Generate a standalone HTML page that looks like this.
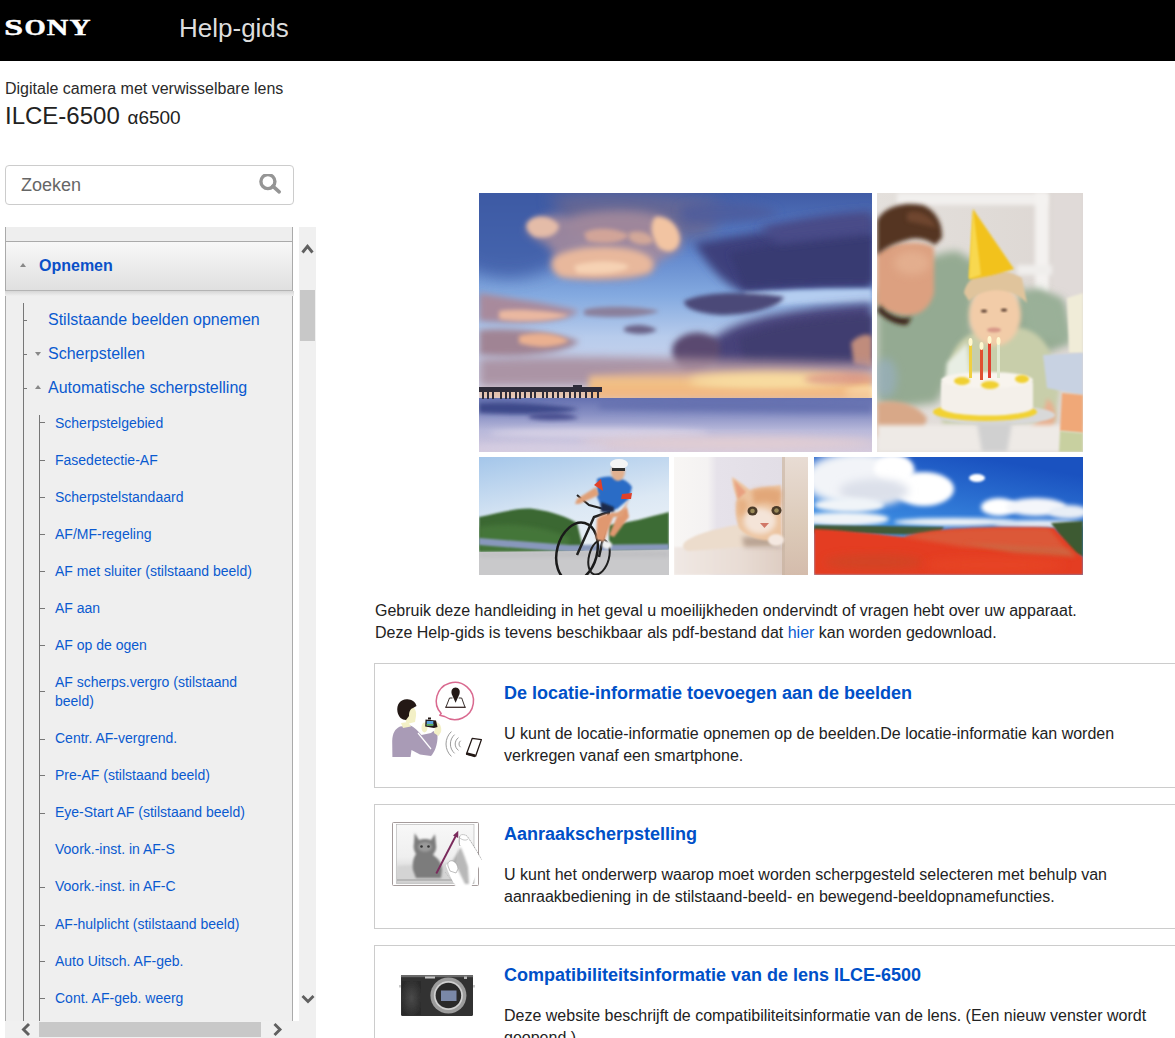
<!DOCTYPE html>
<html><head><meta charset="utf-8">
<style>
*{margin:0;padding:0;box-sizing:border-box}
html,body{width:1175px;height:1038px;overflow:hidden;background:#fff;font-family:"Liberation Sans",sans-serif;color:#333}
.a{position:absolute;white-space:nowrap}
#hdr{position:absolute;left:0;top:0;width:1175px;height:61px;background:#000}
#help{left:179px;top:13px;font-size:26px;line-height:30px;color:#ddd}
#sub{left:5px;top:79px;font-size:16px;line-height:20px;color:#2a2a2a}
#model{left:5px;top:102px;font-size:24px;line-height:28px;color:#222}
#model span{font-size:19px;margin-left:1px}
#search{position:absolute;left:5px;top:165px;width:289px;height:40px;border:1px solid #ccc;border-radius:4px;background:#fff}
#search .t{position:absolute;left:15px;top:8px;font-size:18px;line-height:22px;color:#666}
#panel{position:absolute;left:5px;top:227px;width:288px;height:794px;background:#efefef;border-left:1px solid #aaa;border-right:1px solid #aaa;overflow:hidden}
#gap{position:absolute;left:293px;top:227px;width:6px;height:794px;background:#fff}
#vsb{position:absolute;left:299px;top:227px;width:17px;height:811px;background:#f0f0f0}
#hsb{position:absolute;left:5px;top:1021px;width:311px;height:17px;background:#f0f0f0}
#topbar{position:absolute;left:0;top:0;width:286px;height:15px;background:#eee;border-bottom:1px solid #aaa}
#opn{position:absolute;left:0;top:15px;width:286px;height:49px;background:linear-gradient(#f8f8f8,#e0e0e0);border-bottom:1px solid #b4b4b4}
#opn .t{position:absolute;left:33px;top:14px;font-size:16px;font-weight:bold;color:#0a50c8;line-height:20px}
.tri{position:absolute;width:0;height:0;border-left:3px solid transparent;border-right:3px solid transparent}
.up{border-bottom:4px solid #888}
.dn{border-top:4px solid #888}
.l1{position:absolute;font-size:16px;line-height:20px;color:#0a5ad0;white-space:nowrap}
.l2{position:absolute;font-size:14px;line-height:19px;color:#0a5ad0;white-space:nowrap}
.vl{position:absolute;width:1px;background:#777}
.tk{position:absolute;height:1px;background:#777}
#intro{left:375px;top:600px;font-size:16px;line-height:21.6px;color:#222}
#intro a{color:#0a5ad0;text-decoration:none}
.card{position:absolute;left:374px;width:900px;height:125px;border:1px solid #ccc;background:#fff}
.card .ti{position:absolute;left:129px;top:18px;font-size:18px;font-weight:bold;color:#0050c8;line-height:22px;white-space:nowrap}
.card .bd{position:absolute;left:129px;top:59px;font-size:16px;line-height:21.6px;color:#222;white-space:nowrap}
.ph{position:absolute;overflow:hidden}
</style></head><body>
<div id="hdr">
 <svg class="a" style="left:0px;top:15px" width="96" height="24" viewBox="0 0 96 24"><g font-family="Liberation Serif" font-weight="bold" font-size="23.5" fill="#fff" stroke="#fff" stroke-width="0.5">
<text x="4.3" y="20" textLength="18.8" lengthAdjust="spacingAndGlyphs">S</text>
<text x="24.6" y="20" textLength="21.2" lengthAdjust="spacingAndGlyphs">O</text>
<text x="46.8" y="20" textLength="21.6" lengthAdjust="spacingAndGlyphs">N</text>
<text x="69.4" y="20" textLength="21" lengthAdjust="spacingAndGlyphs">Y</text></g></svg>
 <div id="help" class="a">Help-gids</div>
</div>
<div id="sub" class="a">Digitale camera met verwisselbare lens</div>
<div id="model" class="a">ILCE-6500 <span>α6500</span></div>
<div id="search"><div class="t">Zoeken</div>
 <svg style="position:absolute;left:253px;top:8px" width="26" height="26" viewBox="0 0 26 26"><circle cx="8.9" cy="7.6" r="7" fill="none" stroke="#959595" stroke-width="3.4"/><line x1="13.8" y1="12.2" x2="20.2" y2="17.8" stroke="#959595" stroke-width="3.6" stroke-linecap="round"/></svg>
</div>

<div id="panel">
 <div id="topbar"></div>
 <div class="vl" style="left:17px;top:76px;height:720px"></div>
<div class="vl" style="left:33px;top:188px;height:610px"></div>
<div class="l1" style="left:42px;top:83px">Stilstaande beelden opnemen</div>
<div class="tk" style="left:18px;top:93px;width:3px"></div>
<div class="l1" style="left:42px;top:117px">Scherpstellen</div>
<div class="tk" style="left:18px;top:127px;width:3px"></div>
<div class="tri dn" style="left:29px;top:125px"></div>
<div class="l1" style="left:42px;top:151px">Automatische scherpstelling</div>
<div class="tk" style="left:18px;top:161px;width:3px"></div>
<div class="tri up" style="left:29px;top:158px"></div>
<div class="l2" style="left:49px;top:187px">Scherpstelgebied</div>
<div class="tk" style="left:34px;top:195px;width:5px"></div>
<div class="l2" style="left:49px;top:224px">Fasedetectie-AF</div>
<div class="tk" style="left:34px;top:233px;width:5px"></div>
<div class="l2" style="left:49px;top:261px">Scherpstelstandaard</div>
<div class="tk" style="left:34px;top:270px;width:5px"></div>
<div class="l2" style="left:49px;top:298px">AF/MF-regeling</div>
<div class="tk" style="left:34px;top:307px;width:5px"></div>
<div class="l2" style="left:49px;top:335px">AF met sluiter (stilstaand beeld)</div>
<div class="tk" style="left:34px;top:344px;width:5px"></div>
<div class="l2" style="left:49px;top:372px">AF aan</div>
<div class="tk" style="left:34px;top:381px;width:5px"></div>
<div class="l2" style="left:49px;top:409px">AF op de ogen</div>
<div class="tk" style="left:34px;top:418px;width:5px"></div>
<div class="l2" style="left:49px;top:446px">AF scherps.vergro (stilstaand<br>beeld)</div>
<div class="tk" style="left:34px;top:464px;width:5px"></div>
<div class="l2" style="left:49px;top:502px">Centr. AF-vergrend.</div>
<div class="tk" style="left:34px;top:512px;width:5px"></div>
<div class="l2" style="left:49px;top:539px">Pre-AF (stilstaand beeld)</div>
<div class="tk" style="left:34px;top:548px;width:5px"></div>
<div class="l2" style="left:49px;top:576px">Eye-Start AF (stilstaand beeld)</div>
<div class="tk" style="left:34px;top:586px;width:5px"></div>
<div class="l2" style="left:49px;top:613px">Voork.-inst. in AF-S</div>
<div class="l2" style="left:49px;top:650px">Voork.-inst. in AF-C</div>
<div class="tk" style="left:34px;top:660px;width:5px"></div>
<div class="l2" style="left:49px;top:688px">AF-hulplicht (stilstaand beeld)</div>
<div class="tk" style="left:34px;top:698px;width:5px"></div>
<div class="l2" style="left:49px;top:725px">Auto Uitsch. AF-geb.</div>
<div class="tk" style="left:34px;top:734px;width:5px"></div>
<div class="l2" style="left:49px;top:762px">Cont. AF-geb. weerg</div>
<div class="tk" style="left:34px;top:771px;width:5px"></div>

 <div id="opn"><div class="tri up" style="left:14px;top:21px"></div><div class="t">Opnemen</div></div>
</div>
<div id="gap"></div>
<div class="a" style="left:5px;top:291px;width:289px;height:5px;background:linear-gradient(#d6d6d6,#efefef)"></div>
<div id="vsb"></div>
<div id="hsb"></div>
<svg class="a" style="left:299px;top:227px" width="17" height="811" viewBox="0 0 17 811">
 <polyline points="3.5,25.5 8.5,19.3 13.5,25.5" fill="none" stroke="#606060" stroke-width="2.9"/>
 <rect x="1" y="63" width="15" height="51" fill="#c8c8c8"/>
 <polyline points="3.5,769 9,774.5 14.5,769" fill="none" stroke="#606060" stroke-width="2.9"/>
</svg>
<svg class="a" style="left:5px;top:1021px" width="311" height="17" viewBox="0 0 311 17">
 <polyline points="24,3 18.5,8.5 24,14" fill="none" stroke="#606060" stroke-width="2.9"/>
 <rect x="34" y="1" width="222" height="15" fill="#c8c8c8"/>
 <polyline points="269.5,3 275,8.5 269.5,14" fill="none" stroke="#606060" stroke-width="2.9"/>
</svg>

<div id="intro" class="a">Gebruik deze handleiding in het geval u moeilijkheden ondervindt of vragen hebt over uw apparaat.<br>Deze Help-gids is tevens beschikbaar als pdf-bestand dat <a>hier</a> kan worden gedownload.</div>

<div class="card" style="top:663px"><div class="ti">De locatie-informatie toevoegen aan de beelden</div><div class="bd">U kunt de locatie-informatie opnemen op de beelden.De locatie-informatie kan worden<br>verkregen vanaf een smartphone.</div></div>
<div class="card" style="top:804px"><div class="ti">Aanraakscherpstelling</div><div class="bd">U kunt het onderwerp waarop moet worden scherpgesteld selecteren met behulp van<br>aanraakbediening in de stilstaand-beeld- en bewegend-beeldopnamefuncties.</div></div>
<div class="card" style="top:945px"><div class="ti">Compatibiliteitsinformatie van de lens ILCE-6500</div><div class="bd">Deze website beschrijft de compatibiliteitsinformatie van de lens. (Een nieuw venster wordt<br>geopend.)</div></div>

<div class="a" style="left:380px;top:670px"><svg width="110" height="100" viewBox="380 670 110 100">
<!-- body -->
<path d="M392.4,757 L392.2,741 C392.5,733 395,729 400,726.5 L410.5,725.5 C414,727 418,731 421.5,735 L431,733 L433.5,731 L437.5,735 C438,745 434,753 431,756 L420,754.5 L411.5,750 L410.5,757 Z" fill="#a99bb6"/>
<path d="M418,733 L431,749" stroke="#fff" stroke-width="1.2"/>
<!-- neck / face -->
<path d="M401,723 L408,722 L411,726.5 L403,728 Z" fill="#f3f0c6"/>
<path d="M405,705 C412,704 417,709 416,716 L415,722 L407,724 C404,718 404,710 405,705 Z" fill="#f3f0c6"/>
<!-- hair -->
<path d="M397.5,712 C396,703 402,698 409,699.5 C413,700 416,703 416.5,706 L413,708 C410,709 409,712 409,716 L406,720 C402,720 398.5,717 397.5,712 Z" fill="#231815"/>
<!-- hands -->
<ellipse cx="424.5" cy="727.5" rx="3" ry="5" fill="#f3f0c6"/>
<path d="M436,722 C440,723 442,727 441,732 L438.5,736 L434,733 Z" fill="#f3f0c6"/>
<!-- camera -->
<path d="M425.5,719.5 L436,720.5 L437.5,727 L434,728 L425.2,726.5 Z" fill="#231815"/>
<rect x="426.7" y="721" width="6.6" height="4.6" fill="#5aa0d8"/>
<rect x="426.7" y="724" width="6.6" height="1.6" fill="#60b050"/>
<rect x="428" y="717.5" width="3" height="2" fill="#231815"/>
<!-- bubble -->
<path d="M441.2,713.6 A18.6,18.6 0 1 1 444.6,716.5 L439.8,715.2 Z" fill="none" stroke="#d9698f" stroke-width="1.5" stroke-linejoin="round"/>
<!-- pin and map -->
<path d="M455.6,702.8 L451.9,694.5 C450.5,690.5 452.5,687.5 455.6,687.5 C458.7,687.5 460.7,690.5 459.3,694.5 Z" fill="#231815"/>
<path d="M452.5,698 L449.5,698 L445.9,707.3 M458.7,698 L461.7,698 L465,707.3" fill="none" stroke="#231815" stroke-width="0.9"/>
<line x1="445.3" y1="707.3" x2="465.7" y2="707.3" stroke="#3a2a28" stroke-width="1.3"/>
<!-- wifi -->
<path d="M451.41,731.57 A17,17 0 0 0 451.41,756.43" fill="none" stroke="#808080" stroke-width="0.8"/>
<path d="M454.57,734.64 A12.6,12.6 0 0 0 454.57,753.36" fill="none" stroke="#808080" stroke-width="0.8"/>
<path d="M458.53,737.61 A7.8,7.8 0 0 0 458.53,750.39" fill="none" stroke="#808080" stroke-width="0.8"/>
<path d="M460.65,740.76 A4,4 0 0 0 460.65,747.24" fill="none" stroke="#808080" stroke-width="0.8"/>
<!-- phone -->
<path d="M466.5,754 L472.2,738.4 L481.4,739.6 L475.6,756.2 Z" fill="none" stroke="#231815" stroke-width="1.3" stroke-linejoin="round"/>
<path d="M466.5,753.5 L475.2,755.8" stroke="#231815" stroke-width="2.8"/>
</svg></div>
<div class="a" style="left:380px;top:810px"><svg width="110" height="90" viewBox="380 810 110 90">
<defs>
 <filter id="g1" x="-50%" y="-50%" width="200%" height="200%"><feGaussianBlur stdDeviation="0.8"/></filter>
 <linearGradient id="ph2" x1="0" y1="0" x2="0" y2="1"><stop offset="0" stop-color="#f8f8f8"/><stop offset="0.55" stop-color="#efefef"/><stop offset="1" stop-color="#c4c4c4"/></linearGradient>
</defs>
<rect x="392.5" y="822.5" width="86" height="63" rx="1" fill="#fff" stroke="#9a9090" stroke-width="0.9"/>
<rect x="396.5" y="824.5" width="77.5" height="59" fill="url(#ph2)" stroke="#b0b0b0" stroke-width="0.6"/>
<path d="M397,866 L474,862 L474,883 L397,883 Z" fill="#d4d4d4" filter="url(#g1)"/>
<line x1="397" y1="880" x2="474" y2="880" stroke="#9a9a9a" stroke-width="1"/>
<!-- cat -->
<path d="M414.7,833 L419,840 C422,838.5 428,838.5 431,840 L435,834 L436,845 C437,850 434,853 433,855 C438,858 442,863 442,870 L441,878 L416,878 L413,870 C412,862 414,857 416,854 C414,851 413,847 414,843 Z" fill="#7c7c7c" filter="url(#g1)"/>
<ellipse cx="425" cy="847" rx="7" ry="5" fill="#9a9a9a" filter="url(#g1)"/>
<circle cx="421.5" cy="846.5" r="1.3" fill="#333"/><circle cx="428.5" cy="846.5" r="1.3" fill="#333"/>
<!-- hand -->
<path d="M459.5,837 C460,834 464,834 467,836 L481.5,859.5 L471.5,886.5 L455,886 C452,880 448,872 446,866 C446,864 448,863 451,864 L455.5,866 L459,846 Z" fill="#fff"/>
<path d="M459.5,837 C460,834 464,834 467,836 C472,843 477,851 481.5,859.5" fill="none" stroke="#707070" stroke-width="0.6" stroke-dasharray="1.2,0.8"/>
<path d="M459.5,837 C459,841 459,844 460,846" fill="none" stroke="#707070" stroke-width="0.6"/>
<path d="M460,838 C462,840 466,841 468,839" fill="none" stroke="#909090" stroke-width="0.5"/>
<path d="M460.5,847 C463,852 466,860 468,867 L469,884 L465,884 C462,878 459,871 456,866 L452,862 C455,857 458,851 460.5,847 Z" fill="#8a8a8a" filter="url(#g1)" opacity="0.6"/>
<path d="M448,866 C447,862 450,860 453,861 C456,862 458,866 458,869 L456,873 L450,871 Z" fill="#fff" stroke="#808080" stroke-width="0.5"/>
<path d="M445,872 L456,886" fill="none" stroke="#a0a0a0" stroke-width="0.5" stroke-dasharray="1,1"/>
<!-- arrow -->
<line x1="436.3" y1="873.5" x2="456" y2="835.5" stroke="#7a2a5c" stroke-width="1.9"/>
<path d="M458.3,830.8 L453,835.5 L458.2,838 Z" fill="#7a2a5c"/>
</svg></div>
<div class="a" style="left:380px;top:955px"><svg width="100" height="70" viewBox="380 955 100 70">
<defs>
 <filter id="h1" x="-50%" y="-50%" width="200%" height="200%"><feGaussianBlur stdDeviation="0.6"/></filter>
 <radialGradient id="grip" cx="0.5" cy="0.5" r="0.6"><stop offset="0" stop-color="#4a4a4a"/><stop offset="1" stop-color="#2a2a2a"/></radialGradient>
</defs>
<g filter="url(#h1)">
<rect x="399" y="985" width="3" height="2.5" fill="#c8c8c8"/>
<rect x="472" y="985" width="3" height="2.5" fill="#c8c8c8"/>
<rect x="401" y="975" width="72" height="41" rx="1.5" fill="#333"/>
<rect x="401" y="975" width="72" height="2.2" fill="#6a6a6a"/>
<rect x="402" y="981" width="19" height="34" rx="1" fill="url(#grip)"/>
<circle cx="448.4" cy="995.5" r="18" fill="#9c9c9c"/>
<circle cx="448.4" cy="995.5" r="14.5" fill="#d0d0d0"/>
<circle cx="448.4" cy="995.5" r="12.8" fill="#2a2a2a"/>
<rect x="441" y="990.5" width="15.5" height="10.5" fill="#7a88a8"/>
<rect x="425" y="976.5" width="10" height="2" fill="#c8c8c8"/>
<rect x="464" y="976.5" width="3" height="2.5" fill="#b8b8b8"/>
</g>
</svg></div>
<div class="ph" style="left:479px;top:193px;width:393px;height:259px"><svg width="393" height="259" viewBox="0 0 393 259">
<defs>
 <linearGradient id="sk" x1="0" y1="0" x2="0" y2="1">
  <stop offset="0" stop-color="#415ca6"/>
  <stop offset="0.25" stop-color="#5a80c8"/>
  <stop offset="0.5" stop-color="#84aae0"/>
  <stop offset="0.7" stop-color="#b8ccec"/>
  <stop offset="1" stop-color="#d8d8ec"/>
 </linearGradient>
 <linearGradient id="sea" x1="0" y1="0" x2="0" y2="1">
  <stop offset="0" stop-color="#6470b0"/>
  <stop offset="0.3" stop-color="#8890c4"/>
  <stop offset="0.6" stop-color="#b8b8da"/>
  <stop offset="1" stop-color="#d4cade"/>
 </linearGradient>
 <linearGradient id="glow" x1="0" y1="0" x2="0" y2="1">
  <stop offset="0" stop-color="#e8b0a0" stop-opacity="0"/>
  <stop offset="0.4" stop-color="#f0c088"/>
  <stop offset="1" stop-color="#f4b878"/>
 </linearGradient>
 <filter id="b2" x="-50%" y="-50%" width="200%" height="200%"><feGaussianBlur stdDeviation="2"/></filter>
 <filter id="b3" x="-50%" y="-50%" width="200%" height="200%"><feGaussianBlur stdDeviation="3"/></filter>
 <filter id="b5" x="-50%" y="-50%" width="200%" height="200%"><feGaussianBlur stdDeviation="5"/></filter>
 <filter id="b8" x="-50%" y="-50%" width="200%" height="200%"><feGaussianBlur stdDeviation="8"/></filter>
</defs>
<rect width="393" height="206" fill="url(#sk)"/>
<!-- top-left darker -->
<ellipse cx="30" cy="30" rx="70" ry="55" fill="#3c5aa4" filter="url(#b8)" opacity="0.8"/>
<!-- top purple-gray area between peach clouds -->
<path d="M70,5 C110,-5 200,0 240,10 L235,40 C210,50 150,52 100,45 Z" fill="#6a6890" filter="url(#b8)" opacity="0.85"/>
<!-- peach clouds upper -->
<path d="M47,38 C52,26 70,18 90,24 C110,18 150,14 178,22 C198,28 206,45 200,58 C192,64 178,66 176,74 C172,84 140,88 110,86 C85,85 72,80 72,70 C78,62 72,52 60,48 Z" fill="#a88c9c" filter="url(#b5)" opacity="0.85"/>
<path d="M48,30 C55,20 72,22 80,32 C80,42 68,46 56,44 C49,40 46,35 48,30 Z" fill="#e4bca8" filter="url(#b2)"/>
<path d="M76,64 C92,54 122,52 150,56 C172,60 180,70 170,80 C150,86 110,87 82,84 C72,78 71,70 76,64 Z" fill="#e8b89c" filter="url(#b3)"/>
<path d="M95,73 C110,67 140,67 150,73 C146,80 120,82 98,80 Z" fill="#f6d2b4" filter="url(#b2)"/>
<path d="M176,24 C188,22 200,32 201,46 C200,58 190,62 180,55 C172,45 170,32 176,24 Z" fill="#f2c4a2" filter="url(#b2)"/>
<path d="M105,40 C115,34 135,34 150,42 C145,50 125,52 108,48 Z" fill="#d8a898" filter="url(#b2)" opacity="0.9"/>
<path d="M150,40 C160,36 172,40 175,48 C168,54 155,52 150,46 Z" fill="#e0b098" filter="url(#b2)" opacity="0.8"/>
<!-- right top dark cloud -->
<path d="M215,50 C260,42 320,32 393,25 L393,97 C350,96 300,98 270,102 C250,95 232,78 215,50 Z" fill="#3e407c" filter="url(#b5)"/>
<path d="M250,60 C290,52 340,45 393,40 L393,90 C340,90 290,92 265,94 Z" fill="#383a72" filter="url(#b3)"/>
<path d="M200,15 C230,5 280,8 300,20 C280,30 240,32 205,30 Z" fill="#4e5c9c" filter="url(#b5)" opacity="0.8"/>
<path d="M280,35 C320,25 360,20 393,18 L393,40 L300,50 Z" fill="#4a4c88" filter="url(#b5)"/>
<!-- light band below -->
<path d="M265,100 C300,97 350,96 393,96 L393,110 C350,110 300,112 270,114 Z" fill="#b4cdf0" filter="url(#b2)"/>
<!-- mid dark cloud -->
<path d="M205,108 C225,98 270,98 305,104 C300,115 270,122 240,122 C220,120 205,116 205,108 Z" fill="#4c4a78" filter="url(#b2)"/>
<!-- lower right big dark cloud -->
<path d="M230,150 C250,128 300,116 393,110 L393,176 C360,179 300,181 240,179 C225,170 225,160 230,150 Z" fill="#464279" filter="url(#b5)"/>
<path d="M260,145 C290,132 340,125 393,122 L393,168 C350,170 300,172 265,170 Z" fill="#403c70" filter="url(#b3)"/>
<path d="M195,150 C205,138 225,135 240,148 C245,165 235,180 210,180 C195,175 190,160 195,150 Z" fill="#5a4a70" filter="url(#b3)"/>
<path d="M372,150 C380,140 393,140 393,145 L393,175 L375,172 Z" fill="#e0a080" filter="url(#b2)" opacity="0.8"/>
<!-- left pink clouds -->
<path d="M0,100 C30,105 70,110 100,118 C90,128 50,132 0,128 Z" fill="#a88a9c" filter="url(#b3)"/>
<path d="M20,118 C40,115 70,118 90,122 C80,128 40,130 20,126 Z" fill="#eab8a0" filter="url(#b2)"/>
<path d="M105,117 C120,112 160,113 180,118 C170,124 130,126 105,122 Z" fill="#8a809c" filter="url(#b2)"/>
<path d="M145,135 C155,130 170,132 178,137 C170,142 155,142 145,138 Z" fill="#6a6488" filter="url(#b2)"/>
<path d="M0,137 C30,134 70,138 100,148 C90,160 40,166 0,162 Z" fill="#a08494" filter="url(#b3)"/>
<path d="M40,143 C55,138 80,140 90,148 C75,156 55,155 40,150 Z" fill="#eab090" filter="url(#b2)"/>
<!-- purple horizontal band -->
<path d="M0,165 C80,162 200,165 393,170 L393,192 L0,194 Z" fill="#a88e9e" filter="url(#b5)" opacity="0.9"/>
<!-- glow -->
<path d="M110,182 C200,175 300,172 393,178 L393,205 L110,205 Z" fill="url(#glow)" filter="url(#b3)"/>
<ellipse cx="290" cy="188" rx="80" ry="9" fill="#f8dca0" filter="url(#b5)"/>
<ellipse cx="360" cy="186" rx="35" ry="6" fill="#d88e84" filter="url(#b3)" opacity="0.7"/>
<ellipse cx="390" cy="200" rx="25" ry="5" fill="#fff0c0" filter="url(#b3)"/>
<rect x="0" y="196" width="393" height="10" fill="#f0b888" filter="url(#b2)" opacity="0.6"/>
<!-- sea -->
<rect y="205" width="393" height="54" fill="url(#sea)"/>
<path d="M0,210 C30,208 80,212 100,216 C80,222 30,222 0,220 Z" fill="#3e4a8a" filter="url(#b2)"/>
<path d="M50,222 C70,218 90,220 100,225 C85,228 60,228 50,225 Z" fill="#4a5090" filter="url(#b2)"/>
<path d="M120,210 C200,208 300,208 393,210 L393,220 C300,220 200,218 120,216 Z" fill="#5a66a8" filter="url(#b3)" opacity="0.6"/>
<ellipse cx="120" cy="240" rx="110" ry="5" fill="#e8e0ec" filter="url(#b3)" opacity="0.6"/>
<ellipse cx="250" cy="250" rx="150" ry="7" fill="#e8d0d0" filter="url(#b5)" opacity="0.8"/>
<ellipse cx="60" cy="255" rx="70" ry="5" fill="#d8d0e4" filter="url(#b3)" opacity="0.7"/>
<!-- pier -->
<rect x="0" y="194" width="123" height="5" fill="#2e2c3a"/>
<g fill="#2e2c3a">
<rect x="3" y="198" width="2" height="8"/><rect x="8" y="198" width="2" height="8"/><rect x="13" y="198" width="2" height="8"/>
<rect x="21" y="198" width="2" height="8"/><rect x="26" y="198" width="2" height="8"/><rect x="30" y="198" width="2" height="8"/>
<rect x="36" y="198" width="2" height="8"/><rect x="40" y="198" width="2" height="8"/><rect x="45" y="198" width="2" height="7"/>
<rect x="51" y="198" width="2" height="7"/><rect x="55" y="198" width="2" height="7"/><rect x="63" y="198" width="2" height="7"/>
<rect x="67" y="198" width="2" height="7"/><rect x="73" y="198" width="2" height="7"/><rect x="78" y="198" width="2" height="7"/>
<rect x="84" y="198" width="2" height="7"/><rect x="90" y="198" width="2" height="7"/><rect x="95" y="198" width="2" height="7"/>
<rect x="100" y="198" width="2" height="7"/><rect x="106" y="198" width="2" height="7"/><rect x="112" y="198" width="2" height="7"/><rect x="118" y="198" width="2" height="7"/>
<rect x="94" y="192" width="9" height="2"/>
</g>
</svg></div>
<div class="ph" style="left:877px;top:193px;width:206px;height:259px"><svg width="206" height="259" viewBox="0 0 206 259">
<defs>
 <filter id="c2" x="-50%" y="-50%" width="200%" height="200%"><feGaussianBlur stdDeviation="2"/></filter>
 <filter id="c4" x="-50%" y="-50%" width="200%" height="200%"><feGaussianBlur stdDeviation="4"/></filter>
 <filter id="c1" x="-50%" y="-50%" width="200%" height="200%"><feGaussianBlur stdDeviation="1"/></filter>
 <linearGradient id="bg" x1="0" y1="0" x2="1" y2="0"><stop offset="0" stop-color="#e4e0dc"/><stop offset="1" stop-color="#dcd6d2"/></linearGradient>
</defs>
<rect width="206" height="259" fill="url(#bg)"/>
<rect x="20" y="0" width="150" height="12" fill="#f2f0ee" filter="url(#c2)"/>
<rect x="158" y="0" width="14" height="100" fill="#f4f2f0" filter="url(#c2)"/>
<rect x="140" y="72" width="40" height="10" fill="#f0eeec" filter="url(#c2)"/>
<rect x="175" y="0" width="31" height="110" fill="#e0dad8" filter="url(#c2)"/>
<!-- man shirt -->
<path d="M0,100 C20,80 50,60 80,58 L100,70 L95,140 L160,95 L185,110 L192,150 L170,160 L120,150 L80,170 L60,210 L20,215 L0,210 Z" fill="#94aa92" filter="url(#c4)"/>
<path d="M140,95 L185,105 L195,150 L150,145 Z" fill="#9ab098" filter="url(#c4)"/>
<ellipse cx="8" cy="185" rx="12" ry="20" fill="#98b0c8" filter="url(#c4)" opacity="0.6"/>
<!-- man face -->
<path d="M0,60 C10,50 45,45 57,55 L57,100 C52,118 40,124 25,122 C12,120 4,115 0,110 Z" fill="#dca080" filter="url(#c2)"/>
<ellipse cx="35" cy="70" rx="18" ry="12" fill="#e8b898" filter="url(#c4)" opacity="0.6"/>
<path d="M3,112 C10,122 25,128 35,124 L30,132 C18,132 8,126 0,118 Z" fill="#3a2418" filter="url(#c2)"/>
<!-- man hair -->
<path d="M0,28 C5,15 25,8 45,12 C58,16 66,30 65,45 L58,52 C50,46 40,44 30,47 C18,50 8,55 0,62 Z" fill="#553624" filter="url(#c2)"/>
<path d="M30,20 C40,15 55,22 60,35 C50,32 40,30 30,28 Z" fill="#7a4e34" filter="url(#c2)" opacity="0.7"/>
<!-- man hands -->
<path d="M0,210 C15,205 40,210 50,225 L45,243 C30,248 10,245 0,243 Z" fill="#d8a888" filter="url(#c2)"/>
<!-- boy shirt -->
<path d="M72,175 C75,150 90,140 110,135 L145,135 C165,140 178,155 182,200 L178,230 L65,232 Z" fill="#c8ceaa" filter="url(#c2)"/>
<path d="M70,170 L90,150 L95,200 L68,205 Z" fill="#e8eee4" filter="url(#c2)"/>
<!-- boy face -->
<ellipse cx="118" cy="122" rx="26" ry="31" fill="#f2cca8" filter="url(#c2)"/>
<ellipse cx="117" cy="137" rx="7" ry="2.5" fill="#d89888" filter="url(#c1)"/>
<ellipse cx="107" cy="118" rx="3" ry="1.5" fill="#5a4030" filter="url(#c1)"/>
<ellipse cx="127" cy="117" rx="3" ry="1.5" fill="#5a4030" filter="url(#c1)"/>
<!-- boy hair -->
<path d="M87,100 C90,80 120,70 145,85 L150,110 C135,95 110,92 92,108 Z" fill="#e0c49c" filter="url(#c1)"/>
<!-- boy arm right -->
<path d="M175,210 C182,225 178,240 160,245 L150,240 C160,230 168,220 170,205 Z" fill="#e8b090" filter="url(#c2)"/>
<!-- hat -->
<path d="M96,16 L137,76 C125,80 105,85 92,86 Z" fill="#f2c21e" filter="url(#c1)"/>
<path d="M96,16 L104,82 L92,86 Z" fill="#f8d850" filter="url(#c1)"/>
<!-- table -->
<rect x="0" y="232" width="206" height="27" fill="#eeeae6" filter="url(#c2)"/>
<!-- plate -->
<ellipse cx="118" cy="222" rx="60" ry="10" fill="#d8d8d8" filter="url(#c1)"/>
<path d="M100,230 L135,230 L130,259 L105,259 Z" fill="#d0d0d0" filter="url(#c2)"/>
<!-- cake -->
<ellipse cx="108" cy="219" rx="52" ry="9" fill="#f2d230" filter="url(#c1)"/>
<path d="M64,190 C64,180 155,180 156,190 L156,215 C150,225 70,225 64,215 Z" fill="#f4f0ea" filter="url(#c1)"/>
<ellipse cx="110" cy="187" rx="46" ry="8" fill="#f8f4ee" filter="url(#c1)"/>
<ellipse cx="85" cy="188" rx="8" ry="4" fill="#f0d030" filter="url(#c1)"/>
<ellipse cx="113" cy="192" rx="9" ry="4" fill="#f0d030" filter="url(#c1)"/>
<ellipse cx="145" cy="186" rx="7" ry="4" fill="#f0d030" filter="url(#c1)"/>
<!-- candles -->
<rect x="92" y="150" width="3" height="35" fill="#f0d040"/>
<rect x="103" y="155" width="3" height="32" fill="#e05030"/>
<rect x="111" y="150" width="3" height="35" fill="#e04030"/>
<rect x="120" y="150" width="3" height="35" fill="#e0e8d0"/>
<ellipse cx="93.5" cy="149" rx="2" ry="4" fill="#fff8d0"/>
<ellipse cx="104.5" cy="153" rx="2" ry="4" fill="#fff8d0"/>
<ellipse cx="112.5" cy="147" rx="2" ry="4" fill="#fff8d0"/>
<ellipse cx="121.5" cy="148" rx="2" ry="4" fill="#fff8d0"/>
<!-- gifts right -->
<path d="M190,105 L206,100 L206,160 L192,160 Z" fill="#f0ecd8" filter="url(#c1)"/>
<path d="M166,162 L206,160 L206,202 L170,195 Z" fill="#c8d2e2" filter="url(#c1)"/>
<path d="M185,200 L206,202 L206,240 L183,238 Z" fill="#f0a878" filter="url(#c1)"/>
<path d="M183,238 L206,240 L206,259 L182,259 Z" fill="#c8d0a0" filter="url(#c1)"/>
</svg></div>
<div class="ph" style="left:479px;top:457px;width:190px;height:118px"><svg width="190" height="118" viewBox="0 0 190 118">
<defs>
 <linearGradient id="bsky" x1="0" y1="0" x2="0.3" y2="1"><stop offset="0" stop-color="#a4c6ea"/><stop offset="0.55" stop-color="#dce8f4"/><stop offset="1" stop-color="#f0f4f8"/></linearGradient>
 <filter id="d1" x="-50%" y="-50%" width="200%" height="200%"><feGaussianBlur stdDeviation="1"/></filter>
 <filter id="d2" x="-50%" y="-50%" width="200%" height="200%"><feGaussianBlur stdDeviation="2"/></filter>
</defs>
<rect width="190" height="118" fill="url(#bsky)"/>
<path d="M0,60 C20,56 40,50 55,52 C75,55 88,60 98,66 L105,95 L0,95 Z" fill="#3a6830" filter="url(#d1)"/>
<path d="M130,68 C150,66 170,60 190,55 L190,92 L130,95 Z" fill="#3e6c34" filter="url(#d1)"/>
<path d="M0,70 C30,65 60,68 90,80 L90,95 L0,95 Z" fill="#4a7c3c" filter="url(#d2)" opacity="0.7"/>
<path d="M0,81 L90,88 L190,87 L190,93 L90,95 L0,88 Z" fill="#8898bc" filter="url(#d1)"/>
<path d="M0,95 L190,93 L190,118 L0,118 Z" fill="#c9c9cb"/>
<path d="M0,96 L190,94 L190,100 L0,100 Z" fill="#b8b8bc" filter="url(#d2)" opacity="0.6"/>
<!-- wheels -->
<ellipse cx="98" cy="95" rx="20" ry="30" fill="none" stroke="#1a1a1a" stroke-width="2.5" transform="rotate(15 98 95)"/>
<ellipse cx="120" cy="100" rx="10" ry="18" fill="none" stroke="#202020" stroke-width="2" transform="rotate(15 120 100)"/>
<!-- bike frame -->
<path d="M98,98 L115,60 L130,55 L120,100" fill="none" stroke="#202020" stroke-width="2.5"/>
<path d="M98,38 L110,48 L125,52" fill="none" stroke="#202020" stroke-width="2"/>
<!-- legs -->
<path d="M118,62 C122,58 130,55 135,58 L125,85 L117,82 Z" fill="#e09870" filter="url(#d1)"/>
<path d="M140,55 L148,50 L150,60 L135,80 L130,78 Z" fill="#e09870" filter="url(#d1)"/>
<!-- jersey -->
<path d="M118,22 C125,18 145,18 153,30 L150,42 L138,52 L125,55 L118,40 Z" fill="#2a6cc6" filter="url(#d1)"/>
<path d="M115,28 L122,22 L124,34 Z" fill="#e04028"/>
<path d="M143,37 L153,36 L152,42 L142,42 Z" fill="#e04028"/>
<path d="M122,45 L135,50 L135,55 L122,55 Z" fill="#1a2a4a" filter="url(#d1)"/>
<!-- arms -->
<path d="M117,30 L98,42 L96,47 L100,47 L120,38 Z" fill="#e0a078" filter="url(#d1)"/>
<path d="M150,42 L143,60 L130,60 L132,56 L142,55 Z" fill="#e0a078" filter="url(#d1)"/>
<!-- head -->
<ellipse cx="139" cy="15" rx="7" ry="9" fill="#e0b090" filter="url(#d1)"/>
<ellipse cx="140" cy="7" rx="9" ry="5" fill="#f4f4f4"/>
<rect x="133" y="11" width="13" height="3" fill="#303030"/>
<!-- shoe -->
<ellipse cx="128" cy="88" rx="5" ry="4" fill="#f0f0f0" filter="url(#d1)"/>
</svg></div>
<div class="ph" style="left:674px;top:457px;width:134px;height:118px"><svg width="134" height="118" viewBox="0 0 134 118">
<defs>
 <filter id="e1" x="-50%" y="-50%" width="200%" height="200%"><feGaussianBlur stdDeviation="1"/></filter>
 <filter id="e2" x="-50%" y="-50%" width="200%" height="200%"><feGaussianBlur stdDeviation="2.5"/></filter>
 <linearGradient id="cbg" x1="0" y1="0" x2="1" y2="0"><stop offset="0" stop-color="#f8f6f4"/><stop offset="0.25" stop-color="#f4f2f2"/><stop offset="0.32" stop-color="#e6e2ea"/><stop offset="0.8" stop-color="#e2dee6"/></linearGradient>
 <linearGradient id="cfl" x1="0" y1="0" x2="1" y2="0"><stop offset="0" stop-color="#f0e8e4"/><stop offset="0.5" stop-color="#e8dcd4"/><stop offset="1" stop-color="#d8c4b8"/></linearGradient>
 <linearGradient id="door" x1="0" y1="0" x2="0" y2="1"><stop offset="0" stop-color="#e8dcd4"/><stop offset="0.6" stop-color="#dccab8"/><stop offset="1" stop-color="#d4bcac"/></linearGradient>
</defs>
<rect width="134" height="118" fill="url(#cbg)"/>
<rect x="0" y="90" width="134" height="28" fill="url(#cfl)" filter="url(#e1)"/>
<rect x="108" y="0" width="26" height="118" fill="url(#door)"/>
<rect x="108" y="0" width="3" height="118" fill="#c8b4a4" opacity="0.6"/>
<!-- paw/body -->
<path d="M10,86 C18,78 40,72 62,68 L100,70 L108,90 L60,91 L14,94 C9,93 8,89 10,86 Z" fill="#ecdccc" filter="url(#e1)"/>
<path d="M68,80 L105,78 L108,90 L70,90 Z" fill="#9a8070" filter="url(#e2)" opacity="0.6"/>
<!-- head -->
<path d="M58,20 C62,22 70,28 76,33 C88,30 100,29 107,28 L108,82 C95,86 75,82 66,72 C60,62 62,46 63,42 C60,34 58,26 58,20 Z" fill="#ecc4a0" filter="url(#e1)"/>
<path d="M60,23 L72,35 L64,42 Z" fill="#e89878" filter="url(#e1)" opacity="0.8"/>
<path d="M78,33 C90,30 104,31 108,34 L106,50 C96,44 86,44 80,48 Z" fill="#e0a070" filter="url(#e2)" opacity="0.8"/>
<path d="M63,45 C66,40 70,40 74,48 L70,60 L64,58 Z" fill="#e4a878" filter="url(#e2)" opacity="0.7"/>
<ellipse cx="86" cy="64" rx="16" ry="13" fill="#f4e4d8" filter="url(#e2)"/>
<ellipse cx="78.5" cy="54" rx="5" ry="4.5" fill="#4a3a28"/>
<ellipse cx="102.5" cy="53.5" rx="5" ry="4.5" fill="#4a3a28"/>
<ellipse cx="78.5" cy="54" rx="2.3" ry="2.3" fill="#9a8a58"/>
<ellipse cx="102.5" cy="53.5" rx="2.3" ry="2.3" fill="#9a8a58"/>
<path d="M86,66 L95,66 L90.5,71 Z" fill="#d07868"/>
<ellipse cx="102" cy="83" rx="8" ry="6" fill="#f4e8e0" filter="url(#e1)"/>
</svg></div>
<div class="ph" style="left:814px;top:457px;width:269px;height:118px"><svg width="269" height="118" viewBox="0 0 269 118">
<defs>
 <linearGradient id="psky" x1="0.2" y1="1" x2="0.6" y2="0"><stop offset="0" stop-color="#88c4f0"/><stop offset="0.4" stop-color="#3a8ae0"/><stop offset="1" stop-color="#1a52c0"/></linearGradient>
 <filter id="f2" x="-50%" y="-50%" width="200%" height="200%"><feGaussianBlur stdDeviation="2"/></filter>
 <filter id="f4" x="-50%" y="-50%" width="200%" height="200%"><feGaussianBlur stdDeviation="4"/></filter>
 <filter id="f1" x="-50%" y="-50%" width="200%" height="200%"><feGaussianBlur stdDeviation="1"/></filter>
</defs>
<rect width="269" height="118" fill="url(#psky)"/>
<!-- clouds -->
<ellipse cx="45" cy="22" rx="55" ry="28" fill="#f2f4f8" filter="url(#f4)"/>
<ellipse cx="80" cy="12" rx="20" ry="14" fill="#ffffff" filter="url(#f2)"/>
<ellipse cx="110" cy="32" rx="30" ry="17" fill="#ffffff" filter="url(#f2)"/>
<ellipse cx="60" cy="34" rx="35" ry="12" fill="#dce0ea" filter="url(#f4)"/>
<ellipse cx="35" cy="48" rx="35" ry="7" fill="#f0f4f8" filter="url(#f2)"/>
<ellipse cx="163" cy="21" rx="8" ry="4" fill="#ffffff" filter="url(#f1)"/>
<ellipse cx="185" cy="50" rx="18" ry="9" fill="#ffffff" filter="url(#f2)"/>
<ellipse cx="222" cy="50" rx="30" ry="9" fill="#f4f6fa" filter="url(#f2)"/>
<ellipse cx="255" cy="55" rx="20" ry="7" fill="#e8eef6" filter="url(#f2)"/>
<ellipse cx="30" cy="62" rx="45" ry="7" fill="#f0f4f8" filter="url(#f2)"/>
<ellipse cx="140" cy="65" rx="60" ry="4" fill="#f0f4f8" filter="url(#f2)"/>
<ellipse cx="225" cy="67" rx="45" ry="4" fill="#e8f0f8" filter="url(#f2)"/>
<!-- green strips -->
<path d="M0,68 L130,70 L125,78 L0,76 Z" fill="#405a38" filter="url(#f1)"/>
<path d="M237,66 L269,64 L269,100 L258,96 Z" fill="#3c5a30" filter="url(#f1)"/>
<!-- field -->
<path d="M0,72 C40,74 70,78 90,80 C120,72 160,70 240,71 L262,95 L269,100 L269,118 L0,118 Z" fill="#e43c22" filter="url(#f1)"/>
<path d="M90,80 C120,72 160,70 235,71 L255,95 L150,90 Z" fill="#dc5838" filter="url(#f2)"/>
<path d="M150,86 L255,92 L262,100 L200,96 Z" fill="#c87048" filter="url(#f2)" opacity="0.7"/>
<ellipse cx="60" cy="105" rx="50" ry="8" fill="#c84828" filter="url(#f4)" opacity="0.6"/>
<ellipse cx="180" cy="108" rx="70" ry="8" fill="#e84a28" filter="url(#f4)" opacity="0.6"/>
</svg></div>
</body></html>
